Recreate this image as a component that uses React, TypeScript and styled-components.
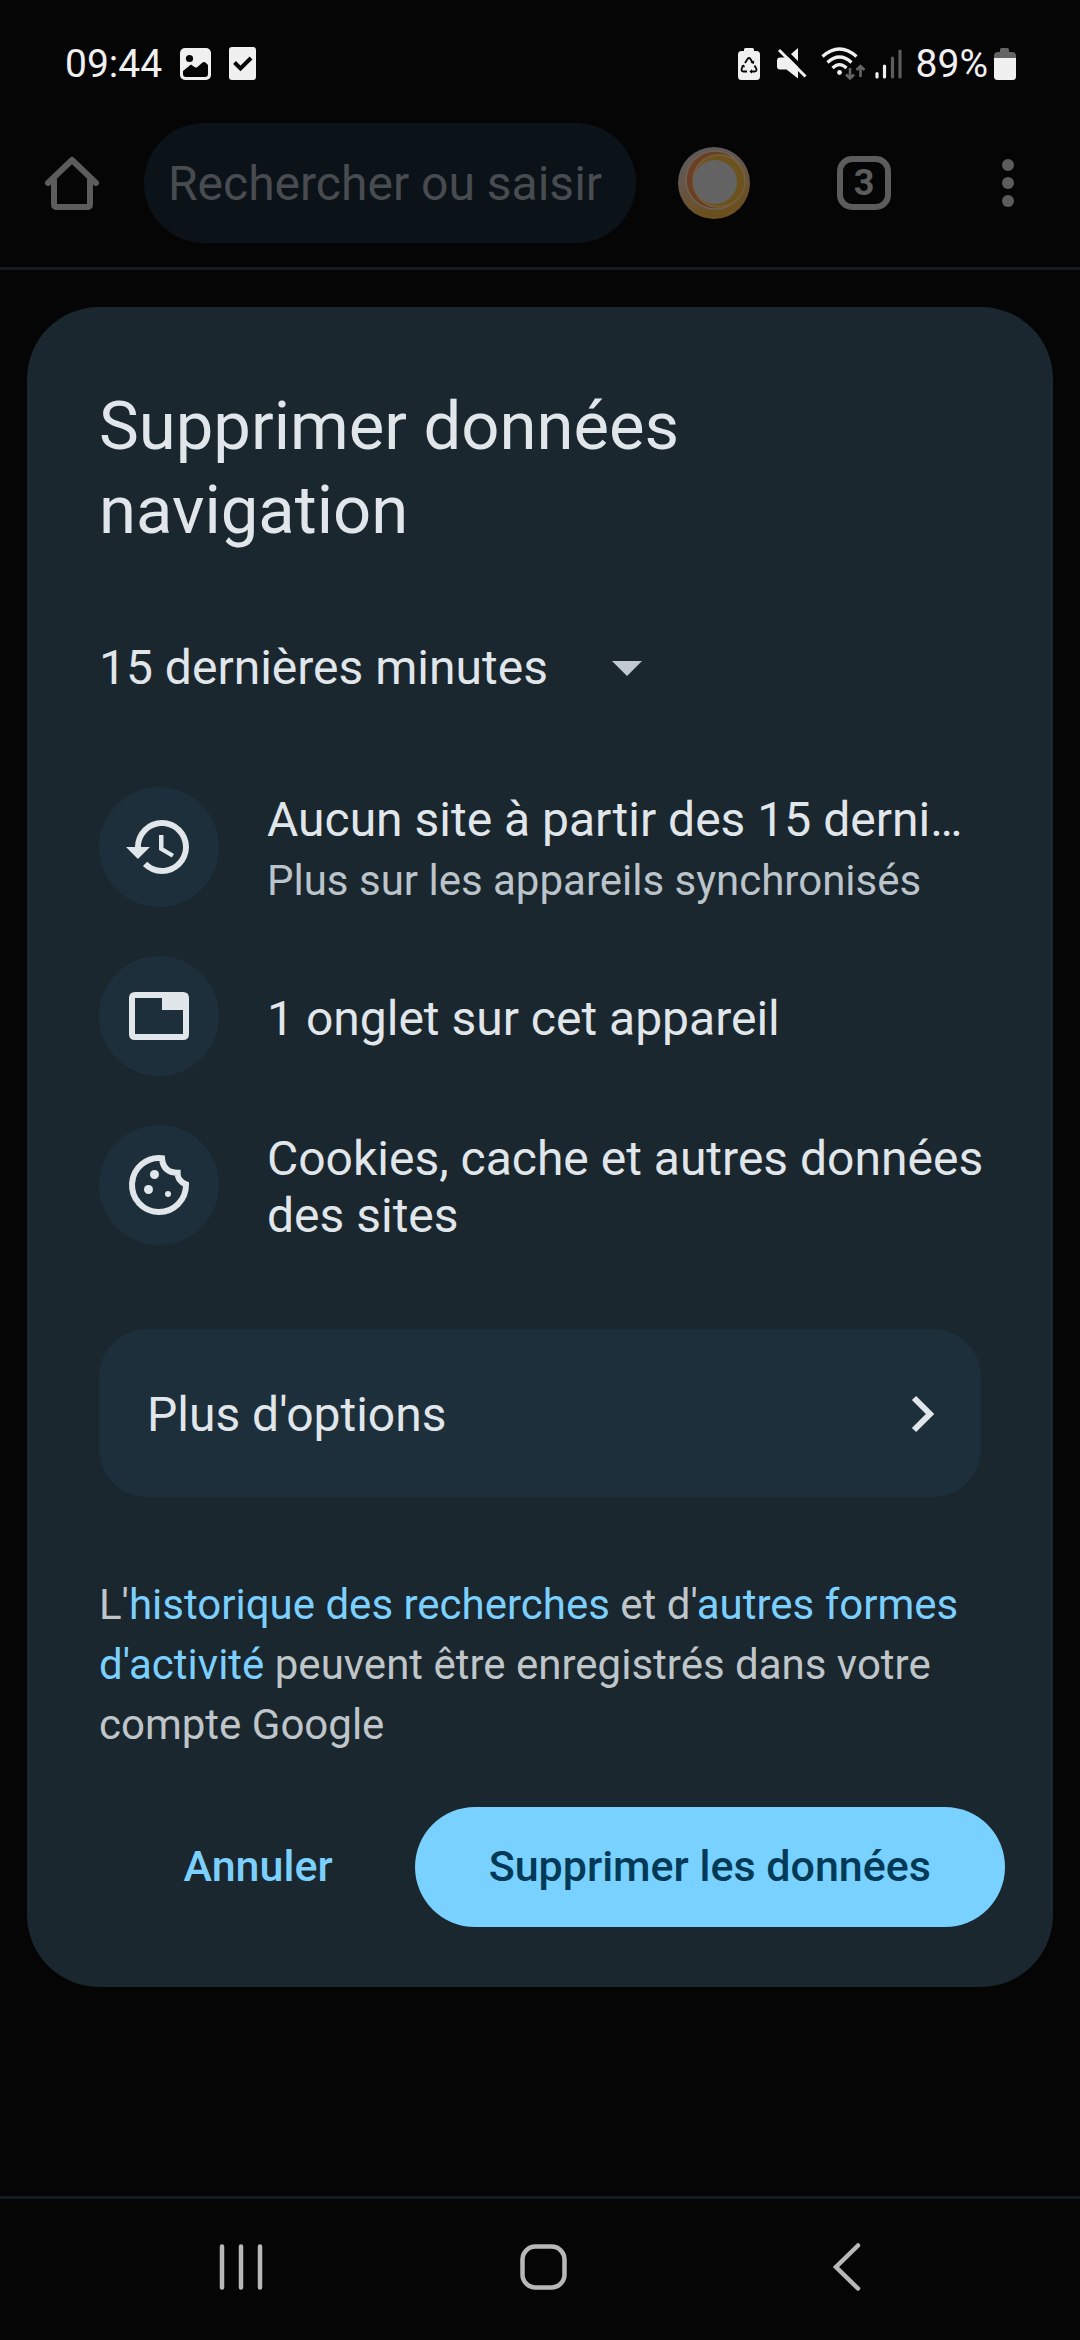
import React from "react";
import styled, { createGlobalStyle } from "styled-components";
import { MdHistory } from "react-icons/md";

const GlobalStyle = createGlobalStyle`
  *, *::before, *::after { box-sizing: border-box; }
  body { margin: 0; background: #050505; font-family: Roboto, "Noto Sans", sans-serif; }
  h1, p, ul { margin: 0; padding: 0; }
  svg { display: block; flex: none; overflow: visible; }
  button, select, input { font: inherit; color: inherit; border: 0; background: none; padding: 0; margin: 0; }
`;

const Screen = styled.div`
  min-height: 100vh;
  display: flex;
  flex-direction: column;
  color: #e1e6eb;
`;

const StatusBar = styled.header`
  display: flex;
  align-items: center;
  justify-content: space-between;
  height: 123px;
  padding: 4px 64px 0 65px;
  font-size: 39px;
  line-height: 46px;
  color: #f0f0f0;
`;

const StatusGroup = styled.div<{ $gap: number }>`
  display: flex;
  align-items: center;
  gap: ${(p) => p.$gap}px;
`;

const Battery = styled.span`
  display: flex;
  align-items: center;
  gap: 6px;
`;

const Toolbar = styled.nav`
  display: flex;
  align-items: center;
  padding-bottom: 24px;
  border-bottom: 3px solid #161d21;
  color: #5c5c5c;
`;

const ToolButton = styled.button<{ $width: number }>`
  display: flex;
  align-items: center;
  justify-content: center;
  width: ${(p) => p.$width}px;
  height: 120px;
`;

const SearchBox = styled.input`
  flex: 1;
  min-width: 0;
  height: 120px;
  padding: 0 24px;
  border-radius: 60px;
  background: #0b1218;
  font-size: 48px;
  outline: none;
  &::placeholder { color: #484c50; opacity: 1; }
`;

const TabCount = styled.span`
  display: flex;
  align-items: center;
  justify-content: center;
  width: 54px;
  height: 54px;
  border: 6px solid;
  border-radius: 15px;
  font-size: 36px;
  font-weight: 700;
  line-height: 40px;
`;

const Content = styled.main`
  flex: 1;
  padding: 37px 27px;
`;

const Dialog = styled.section`
  display: flex;
  flex-direction: column;
  padding: 77px 72px 60px;
  border-radius: 72px;
  background: #1a272e;
`;

const Title = styled.h1`
  max-width: 700px;
  font-size: 67px;
  font-weight: 400;
  line-height: 84px;
`;

const PeriodField = styled.label`
  display: flex;
  align-items: center;
  gap: 64px;
  align-self: flex-start;
  margin-top: 86px;
`;

const PeriodSelect = styled.select`
  appearance: none;
  font-size: 48px;
  line-height: 60px;
  height: 60px;
  outline: none;
  option { color: #e1e6eb; background: #1a272e; }
`;

const DataList = styled.ul`
  display: flex;
  flex-direction: column;
  gap: 49px;
  margin: 89px -4px 0 0;
  list-style: none;
`;

const DataRow = styled.li`
  display: flex;
  align-items: center;
  gap: 48px;
  height: 120px;
`;

const IconDisc = styled.span`
  display: flex;
  align-items: center;
  justify-content: center;
  flex: none;
  width: 120px;
  height: 120px;
  border-radius: 50%;
  background: #1d2f3a;
`;

const RowText = styled.div`
  flex: 1;
  min-width: 0;
  padding-top: 4px;
`;

const Label = styled.p<{ $clip?: boolean }>`
  font-size: 48px;
  line-height: 57px;
  ${(p) => p.$clip && "white-space: nowrap; overflow: hidden; text-overflow: ellipsis;"}
`;

const SubLabel = styled.p`
  margin-top: 6px;
  font-size: 42px;
  line-height: 54px;
  color: #bcc4cb;
`;

const MoreButton = styled.button`
  display: flex;
  align-items: center;
  justify-content: space-between;
  height: 168px;
  margin-top: 84px;
  padding: 2px 46px 0 48px;
  border-radius: 48px;
  background: #1d2f3a;
  font-size: 48px;
`;

const Notice = styled.p`
  margin-top: 78px;
  font-size: 42px;
  line-height: 60px;
  color: #bfc5c9;
`;

const Link = styled.a`
  color: #7bd0ff;
  text-decoration: none;
`;

const Actions = styled.div`
  display: flex;
  justify-content: flex-end;
  gap: 8px;
  margin: 52px -24px 0 0;
`;

const ActionButton = styled.button<{ $filled?: boolean }>`
  height: 120px;
  padding: 0 74px 2px;
  border-radius: 60px;
  font-size: 43px;
  font-weight: 500;
  color: ${(p) => (p.$filled ? "#003a57" : "#7bd0ff")};
  background: ${(p) => (p.$filled ? "#78d1ff" : "transparent")};
`;

const SystemNav = styled.footer`
  display: flex;
  align-items: center;
  justify-content: space-around;
  height: 144px;
  padding: 0 82px 6px 89px;
  border-top: 3px solid #161d21;
  color: #b8b8b8;
`;

const NavButton = styled.button`
  display: flex;
  align-items: center;
  justify-content: center;
  width: 144px;
  height: 120px;
`;

const PhotoIcon = () => (
  <svg width="31" height="32" viewBox="0 0 31 32">
    <rect width="31" height="32" rx="5" fill="#f0f0f0" />
    <circle cx="9.500" cy="10.500" r="3.600" fill="#050505" />
    <path d="M3 26v-3l8-6.500 3.500 2.500q2 1.300 3.500-.5l4.500-4q1.500-1 3 0L28 17v9q0 3-3 3H6q-3 0-3-3z" fill="#050505" />
  </svg>
);

const TaskIcon = () => (
  <svg width="27" height="33" viewBox="0 0 27 33">
    <rect width="27" height="33" rx="3" fill="#f0f0f0" />
    <path d="M5.500 15.500l6 6L22 11" fill="none" stroke="#050505" strokeWidth="4" />
  </svg>
);

const RecycleBatteryIcon = () => (
  <svg width="22" height="32" viewBox="0 0 22 32">
    <path d="M6 3V1.500Q6 0 7.500 0h7Q16 0 16 1.500V3h2.500Q22 3 22 6.500v22q0 3.500-3.500 3.500h-15Q0 32 0 28.500v-22Q0 3 3.500 3z" fill="#f0f0f0" />
    <g fill="none" stroke="#050505" strokeWidth="1.800">
      <path d="M7 15l2.700-4.300q1.300-1.600 2.600 0l2.200 3.800" />
      <path d="M16.500 17.500l1.800 3.200q.8 2.800-1.800 2.800H13" />
      <path d="M9 23.500H5.500Q2.900 23.500 3.700 20.700l1.500-3" />
    </g>
    <path d="M16.300 12.500l-.5 3.500-3.300-1.300zM14 21.200v4.600l-2.600-2.300zM3 18l3-1.500 1 3z" fill="#050505" />
  </svg>
);

const MuteIcon = () => (
  <svg width="33" height="31" viewBox="-3 0 33 31">
    <path d="M3 9.500h7L21 0v30.500L9.500 21.500H3q-3 0-3-3v-6q0-3 3-3z" fill="#f0f0f0" />
    <path d="M3.500 -1.500L31 26" stroke="#050505" strokeWidth="4" />
    <path d="M2 2L28.500 28.500" stroke="#f0f0f0" strokeWidth="3" />
  </svg>
);

const WifiIcon = () => (
  <svg width="40" height="34" viewBox="0 0 40 34">
    <g fill="none" stroke="#f0f0f0" strokeWidth="3.200">
      <path d="M1.500 9.500Q18.500-5.500 35.500 9.500" />
      <path d="M6.500 15.500Q18.500 4.500 30.500 15.500" />
      <path d="M11.500 21Q18.500 14 25.500 21" />
    </g>
    <circle cx="18.500" cy="25.500" r="2.400" fill="#f0f0f0" />
    <g fill="none" stroke="#646464" strokeWidth="2.600">
      <path d="M29 21v10M25 27.500l4 4 4-4" />
      <path d="M39.500 30V19M35.500 23l4-4 4 4" />
    </g>
  </svg>
);

const SignalIcon = () => (
  <svg width="27" height="30" viewBox="0 0 27 30" strokeWidth="3.200" strokeLinecap="round">
    <path d="M2 24.500V28M9.500 17V28" stroke="#f0f0f0" />
    <path d="M17.500 9V28M25 2V28" stroke="#5c5c5c" />
  </svg>
);

const BatteryIcon = () => (
  <svg width="22" height="32" viewBox="0 0 22 32">
    <path d="M6 4V1.500Q6 0 7.500 0h6Q15 0 15 1.500V4h3q4 0 4 4v3H0V8q0-4 4-4z" fill="#646464" />
    <path d="M0 10h22v18.500q0 3.500-3.500 3.500h-15Q0 32 0 28.500z" fill="#f0f0f0" />
  </svg>
);

const HomeIcon = () => (
  <svg width="54" height="54" viewBox="0 0 54 54" fill="none" stroke="currentColor" strokeWidth="6" strokeLinejoin="round" strokeLinecap="round">
    <path d="M3 27L27 4l24 23M9 24v24q0 3 3 3h30q3 0 3-3V24" />
  </svg>
);

const Avatar = () => (
  <svg width="72" height="72" viewBox="0 0 72 72">
    <defs>
      <linearGradient id="rim" x1="0" y1="0" x2="0.300" y2="1">
        <stop offset="0" stopColor="#5c5b60" />
        <stop offset="0.500" stopColor="#64564a" />
        <stop offset="1" stopColor="#6b4f1e" />
      </linearGradient>
    </defs>
    <circle cx="36" cy="36" r="36" fill="url(#rim)" />
    <circle cx="37" cy="33" r="29" fill="#6b3f26" stroke="#6e6255" strokeWidth="1.500" />
    <circle cx="41" cy="34" r="26" fill="#6c521c" stroke="#76603a" strokeWidth="1.500" />
    <circle cx="37" cy="35" r="22" fill="#636363" />
  </svg>
);

const MoreIcon = () => (
  <svg width="12" height="50" viewBox="0 0 12 50" fill="currentColor">
    <circle cx="6" cy="7" r="6" />
    <circle cx="6" cy="25" r="6" />
    <circle cx="6" cy="43" r="6" />
  </svg>
);

const ArrowIcon = () => (
  <svg width="30" height="15" viewBox="0 0 30 15">
    <path d="M0 0h30L15 15z" fill="#c2c9d0" />
  </svg>
);

const TabIcon = () => (
  <svg width="72" height="72" viewBox="0 0 24 24" fill="currentColor">
    <path d="M4 4h16q2 0 2 2v12q0 2-2 2H4q-2 0-2-2V6q0-2 2-2zM4 6v12h16v-8h-7V6z" fillRule="evenodd" />
  </svg>
);

const CookieIcon = () => (
  <svg width="72" height="72" viewBox="0 0 24 24">
    <path d="M13 3.050A9 9 0 1 0 21 11.800Q18.100 10.700 18.200 7.900Q13.400 7.900 13 3.050z" fill="none" stroke="currentColor" strokeWidth="2" />
    <circle cx="10.500" cy="8.500" r="1.500" fill="currentColor" />
    <circle cx="8.500" cy="13.500" r="1.500" fill="currentColor" />
    <circle cx="15" cy="15" r="1" fill="currentColor" />
  </svg>
);

const ChevronIcon = () => (
  <svg width="24" height="36" viewBox="0 0 24 36" fill="none" stroke="currentColor" strokeWidth="6">
    <path d="M3 2l16 16L3 34" />
  </svg>
);

const RecentsIcon = () => (
  <svg width="44" height="46" viewBox="0 0 44 46" stroke="currentColor" strokeWidth="4.500" strokeLinecap="round">
    <path d="M3 2.500v41M22 2.500v41M41 2.500v41" />
  </svg>
);

const HomeKeyIcon = () => (
  <svg width="47" height="46" viewBox="0 0 47 46" fill="none" stroke="currentColor" strokeWidth="4.500">
    <rect x="2.500" y="2.500" width="42" height="41" rx="13" />
  </svg>
);

const BackIcon = () => (
  <svg width="28" height="48" viewBox="0 0 28 48" fill="none" stroke="currentColor" strokeWidth="4.500" strokeLinecap="round">
    <path d="M25 2.500L3 24l22 21.500" />
  </svg>
);

export default function App() {
  return (
    <Screen>
      <GlobalStyle />
      <StatusBar>
        <StatusGroup $gap={18}>
          <span>09:44</span>
          <PhotoIcon />
          <TaskIcon />
        </StatusGroup>
        <StatusGroup $gap={14}>
          <RecycleBatteryIcon />
          <MuteIcon />
          <WifiIcon />
          <SignalIcon />
          <Battery>
            89%
            <BatteryIcon />
          </Battery>
        </StatusGroup>
      </StatusBar>

      <Toolbar>
        <ToolButton $width={144} aria-label="Accueil"><HomeIcon /></ToolButton>
        <SearchBox type="text" placeholder="Rechercher ou saisir" aria-label="Rechercher" />
        <ToolButton $width={156} aria-label="Compte"><Avatar /></ToolButton>
        <ToolButton $width={144} aria-label="Onglets"><TabCount>3</TabCount></ToolButton>
        <ToolButton $width={144} aria-label="Menu"><MoreIcon /></ToolButton>
      </Toolbar>

      <Content>
        <Dialog role="dialog" aria-labelledby="title">
          <Title id="title">Supprimer données navigation</Title>
          <PeriodField>
            <PeriodSelect aria-label="Période" defaultValue="15m">
              <option value="15m">15 dernières minutes</option>
              <option value="1h">Dernière heure</option>
            </PeriodSelect>
            <ArrowIcon />
          </PeriodField>

          <DataList>
            <DataRow>
              <IconDisc><MdHistory size={72} /></IconDisc>
              <RowText>
                <Label $clip>Aucun site à partir des 15 dernières minutes</Label>
                <SubLabel>Plus sur les appareils synchronisés</SubLabel>
              </RowText>
            </DataRow>
            <DataRow>
              <IconDisc><TabIcon /></IconDisc>
              <RowText><Label>1 onglet sur cet appareil</Label></RowText>
            </DataRow>
            <DataRow>
              <IconDisc><CookieIcon /></IconDisc>
              <RowText><Label>Cookies, cache et autres données des sites</Label></RowText>
            </DataRow>
          </DataList>

          <MoreButton>
            Plus d'options
            <ChevronIcon />
          </MoreButton>

          <Notice>
            L'<Link href="#historique">historique des recherches</Link> et d'<Link href="#activite">autres formes d'activité</Link> peuvent être enregistrés dans votre compte Google
          </Notice>

          <Actions>
            <ActionButton>Annuler</ActionButton>
            <ActionButton $filled>Supprimer les données</ActionButton>
          </Actions>
        </Dialog>
      </Content>

      <SystemNav>
        <NavButton aria-label="Applications récentes"><RecentsIcon /></NavButton>
        <NavButton aria-label="Écran d'accueil"><HomeKeyIcon /></NavButton>
        <NavButton aria-label="Retour"><BackIcon /></NavButton>
      </SystemNav>
    </Screen>
  );
}
